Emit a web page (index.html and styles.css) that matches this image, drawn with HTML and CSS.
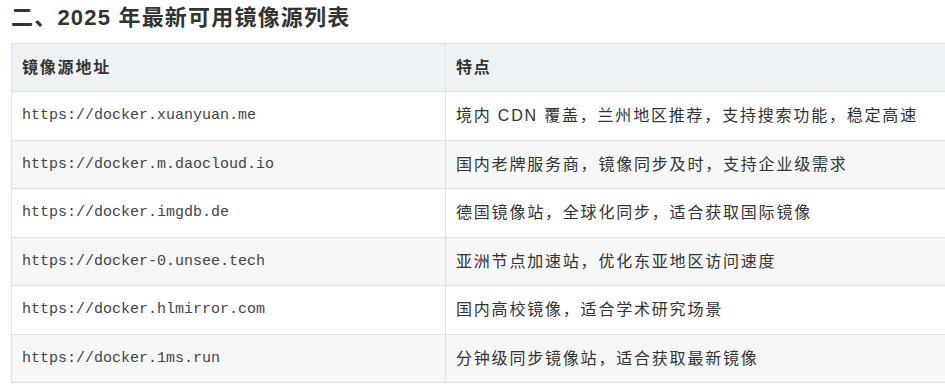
FILE: index.html
```html
<!DOCTYPE html>
<html lang="zh">
<head>
<meta charset="utf-8">
<link rel="stylesheet" href="styles.css">
</head>
<body>
<h2 class="title">二、2025 年最新可用镜像源列表</h2>
<table class="mirrors">
  <thead>
    <tr><th class="c1">镜像源地址</th><th>特点</th></tr>
  </thead>
  <tbody>
    <tr><td class="url">https://docker.xuanyuan.me</td><td>境内 CDN 覆盖，兰州地区推荐，支持搜索功能，稳定高速</td></tr>
    <tr><td class="url">https://docker.m.daocloud.io</td><td>国内老牌服务商，镜像同步及时，支持企业级需求</td></tr>
    <tr><td class="url">https://docker.imgdb.de</td><td>德国镜像站，全球化同步，适合获取国际镜像</td></tr>
    <tr><td class="url">https://docker-0.unsee.tech</td><td>亚洲节点加速站，优化东亚地区访问速度</td></tr>
    <tr><td class="url">https://docker.hlmirror.com</td><td>国内高校镜像，适合学术研究场景</td></tr>
    <tr><td class="url">https://docker.1ms.run</td><td>分钟级同步镜像站，适合获取最新镜像</td></tr>
  </tbody>
</table>
</body>
</html>
```
FILE: styles.css
```css
html, body {
  margin: 0;
  padding: 0;
  background: #fff;
  overflow: hidden;
}
body {
  padding: 0 0 0 11px;
  font-family: "Liberation Sans", "Noto Sans CJK SC", sans-serif;
  color: #333;
  width: 1000px;
}
.title {
  margin: 0;
  padding-top: 3px;
  height: 40px;
  font-size: 22px;
  line-height: 30px;
  letter-spacing: 1.2px;
  font-weight: bold;
  color: #333;
}
.mirrors {
  border-collapse: collapse;
  width: 960px;
  table-layout: fixed;
}
.mirrors th,
.mirrors td {
  border: 1px solid #dfe2e5;
  padding: 12px 10px 11.5px 10px;
  line-height: 24px;
  text-align: left;
  vertical-align: middle;
  font-size: 16px;
  letter-spacing: 1.8px;
  color: #333;
  white-space: nowrap;
}
.mirrors th {
  background: #eff2f5;
  font-weight: bold;
  height: 24px;
  padding-top: 12px;
  padding-bottom: 11px;
  color: #333;
}
.mirrors .c1 {
  width: 413px;
}
.mirrors td {
  height: 24px;
}
.mirrors tbody tr:nth-child(even) td {
  background: #f6f7f8;
}
.mirrors td.url {
  font-family: "Liberation Mono", monospace;
  font-size: 15px;
  letter-spacing: 0;
  color: #444;
}
```
